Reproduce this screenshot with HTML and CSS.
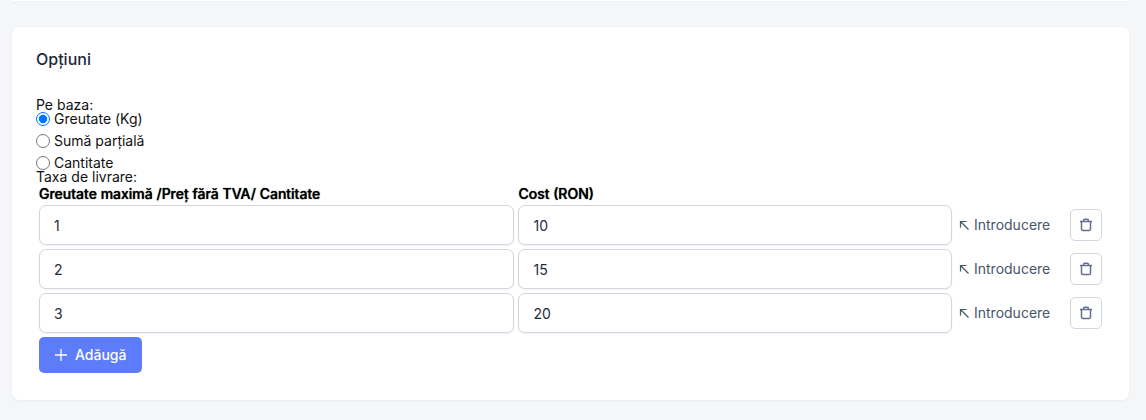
FILE: index.html
```
<!DOCTYPE html>
<html lang="ro">
<head>
    <meta charset="UTF-8">
    <meta name="viewport" content="width=device-width, initial-scale=1.0">
    <title>Opțiuni</title>
    <link rel="stylesheet" href="styles.css">
</head>
<body>
    <svg class="sprite" aria-hidden="true">
        <symbol id="icon-arrow" viewBox="0 0 12 12">
            <path d="M2.5 8.5v-6h6M2.5 2.5l8 8" fill="none" stroke="currentColor" stroke-width="1.2"/>
        </symbol>
        <symbol id="icon-trash" viewBox="0 0 14 14">
            <path d="M1 3.5h12M4.5 3.5V2.8c0-1 .5-1.5 1.3-1.5h2.4c.8 0 1.3.5 1.3 1.5v.7M2.5 3.5v7.7c0 .9.5 1.3 1.3 1.3h6.4c.8 0 1.3-.4 1.3-1.3V3.5" fill="none" stroke="currentColor" stroke-width="1.5"/>
        </symbol>
    </svg>

    <div class="card card-end"></div>

    <section class="card">
        <h2>Opțiuni</h2>

        <form>
            <div role="radiogroup" aria-labelledby="basis">
                <div id="basis">Pe baza:</div>
                <div class="radio-list">
                    <label class="radio"><input type="radio" name="basis" checked> Greutate (Kg)</label>
                    <label class="radio"><input type="radio" name="basis"> Sumă parțială</label>
                    <label class="radio"><input type="radio" name="basis"> Cantitate</label>
                </div>
            </div>

            <div>Taxa de livrare:</div>
            <table class="rates">
                <thead>
                    <tr>
                        <th class="col-max" id="max">Greutate maximă /Preț fără TVA/ Cantitate</th>
                        <th id="cost">Cost (RON)</th>
                        <td class="col-actions"></td>
                    </tr>
                </thead>
                <tbody>
                    <tr>
                        <td><input class="field" type="text" aria-labelledby="max" value="1"></td>
                        <td><input class="field" type="text" aria-labelledby="cost" value="10"></td>
                        <td>
                            <div class="actions">
                                <button type="button" class="insert-btn"><svg class="arrow"><use href="#icon-arrow"/></svg>Introducere</button>
                                <button type="button" class="delete-btn" aria-label="Șterge"><svg class="trash"><use href="#icon-trash"/></svg></button>
                            </div>
                        </td>
                    </tr>
                    <tr>
                        <td><input class="field" type="text" aria-labelledby="max" value="2"></td>
                        <td><input class="field" type="text" aria-labelledby="cost" value="15"></td>
                        <td>
                            <div class="actions">
                                <button type="button" class="insert-btn"><svg class="arrow"><use href="#icon-arrow"/></svg>Introducere</button>
                                <button type="button" class="delete-btn" aria-label="Șterge"><svg class="trash"><use href="#icon-trash"/></svg></button>
                            </div>
                        </td>
                    </tr>
                    <tr>
                        <td><input class="field" type="text" aria-labelledby="max" value="3"></td>
                        <td><input class="field" type="text" aria-labelledby="cost" value="20"></td>
                        <td>
                            <div class="actions">
                                <button type="button" class="insert-btn"><svg class="arrow"><use href="#icon-arrow"/></svg>Introducere</button>
                                <button type="button" class="delete-btn" aria-label="Șterge"><svg class="trash"><use href="#icon-trash"/></svg></button>
                            </div>
                        </td>
                    </tr>
                </tbody>
                <tfoot>
                    <tr>
                        <td colspan="3">
                            <button type="button" class="add-btn">
                                <svg class="plus" viewBox="0 0 12 12"><path d="M6 0v12M0 6h12" stroke="currentColor" stroke-width="1.3"/></svg>
                                Adăugă
                            </button>
                        </td>
                    </tr>
                </tfoot>
            </table>
        </form>
    </section>
</body>
</html>
```
FILE: styles.css
```
* {
    box-sizing: border-box;
}

body {
    margin: 0;
    padding: 0 17px 20px 12px;
    background: #f5f6f8;
    color: #111;
    font-family: Inter, "Liberation Sans", sans-serif;
    font-size: 14px;
    line-height: 14px;
}

.sprite {
    display: none;
}

.card {
    padding: 24px;
    background: #fff;
    border-radius: 7px;
    box-shadow: 0 1px 3px rgba(30, 30, 80, 0.05);
}

/* bottom edge of the previous card */
.card-end {
    height: 1px;
    padding: 0;
    margin-bottom: 26px;
    border-radius: 0 0 7px 7px;
}

h2 {
    margin: 0 0 31px;
    font-size: 16px;
    font-weight: 500;
    line-height: 16px;
    color: #1e293b;
}

.radio-list {
    display: flex;
    flex-direction: column;
    align-items: flex-start;
    gap: 8px;
}

.radio {
    display: flex;
    align-items: center;
    gap: 4px;
}

.radio input {
    width: 14px;
    height: 14px;
    margin: 0;
}

.rates {
    width: 100%;
    table-layout: fixed;
    border-spacing: 2px;
}

.rates th,
.rates td {
    padding: 1px;
}

.rates th {
    text-align: left;
    font-weight: 500;
    color: #000;
    text-shadow: 0 0 1px #000;
}

.col-max {
    width: 45%;
}

.col-actions {
    width: 148px;
}

.field {
    display: block;
    width: 100%;
    height: 40px;
    padding: 0 14px;
    border: 1px solid #d1d5e0;
    border-radius: 7px;
    background: #fff;
    box-shadow: 0 1px 2px rgba(30, 30, 80, 0.06);
    color: #1e293b;
    font: inherit;
}

.actions {
    display: flex;
    align-items: center;
    justify-content: space-between;
}

button {
    display: flex;
    align-items: center;
    justify-content: center;
    font: inherit;
    cursor: pointer;
}

.insert-btn {
    gap: 4px;
    padding: 0 0 0 2px;
    border: none;
    background: none;
    color: #475569;
}

.arrow,
.plus {
    width: 12px;
    height: 12px;
}

.delete-btn {
    width: 32px;
    height: 32px;
    padding: 0;
    border: 1px solid #d1d5e0;
    border-radius: 5px;
    background: #fff;
    color: #64708b;
}

.trash {
    width: 14px;
    height: 14px;
}

.add-btn {
    gap: 8px;
    height: 36px;
    padding: 0 16px;
    border: none;
    border-radius: 5px;
    background: #5c7cfa;
    color: #fff;
    font-weight: 500;
}
```
